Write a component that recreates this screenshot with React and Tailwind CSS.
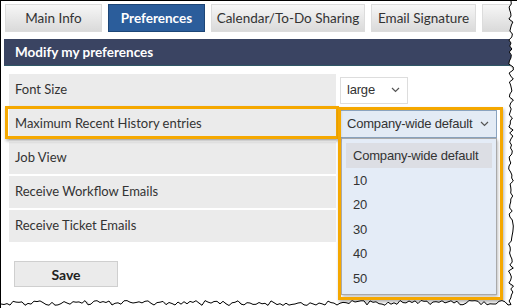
import React from "react";

function Chevron() {
  return (
    <svg width="9" height="6" viewBox="0 0 9 6" className="shrink-0">
      <polyline points="1,1 4.5,4.5 8,1" fill="none" stroke="#555" strokeWidth="1.2" />
    </svg>
  );
}

function tornPoints() {
  const pts = [];
  let seed = 7;
  const rnd = () => {
    seed = (seed * 9301 + 49297) % 233280;
    return seed / 233280;
  };
  for (let y = 0; y <= 300; y += 3) {
    pts.push([510 + (rnd() - 0.5) * 5, y]);
  }
  for (let x = 510; x >= 0; x -= 3) {
    pts.push([x, 302 + (rnd() - 0.5) * 5]);
  }
  return pts;
}

function TornEdge() {
  const pts = tornPoints();
  const line = pts.map((p) => p[0].toFixed(1) + "," + p[1].toFixed(1)).join(" ");
  const fill = line + " 0,308 517,308 517,0";
  const shadow = pts.map((p) => (p[0] + 2).toFixed(1) + "," + (p[1] + 2).toFixed(1)).join(" ");
  return (
    <svg className="absolute left-0 top-0 pointer-events-none" width="517" height="308" viewBox="0 0 517 308">
      <polyline points={shadow} fill="none" stroke="#bbb" strokeWidth="2" opacity="0.6" />
      <polygon points={fill} fill="#fff" />
      <polyline points={line} fill="none" stroke="#000" strokeWidth="1" />
    </svg>
  );
}

const tabBase =
  "h-[28px] flex items-center justify-center border text-[13.5px] shrink-0 whitespace-nowrap";
const arial = { fontFamily: "'Liberation Sans', Arial, sans-serif", letterSpacing: "-0.2px" };

export default function App() {
  const rows = ["Font Size", "Maximum Recent History entries", "Job View", "Receive Workflow Emails", "Receive Ticket Emails"];
  return (
    <div
      className="relative w-[517px] h-[308px] bg-white overflow-hidden border-l border-t border-black text-[#333]"
      style={{ fontFamily: "Lato, 'Open Sans', sans-serif" }}
    >
      {/* tabs */}
      <div className="flex gap-[6px] pl-[4px] pt-[3px]">
        <div className={tabBase + " w-[97px] border-[#dcdcdc] bg-gradient-to-b from-[#f6f6f6] to-[#dadada]"}>Main Info</div>
        <div className={tabBase + " w-[97px] border-[#1d4677] bg-[#2b5d9b] text-white font-bold"}>Preferences</div>
        <div className={tabBase + " w-[154px] border-[#dcdcdc] bg-gradient-to-b from-[#f6f6f6] to-[#dadada]"}>Calendar/To-Do Sharing</div>
        <div className={tabBase + " w-[105px] border-[#dcdcdc] bg-gradient-to-b from-[#f6f6f6] to-[#dadada]"}>Email Signature</div>
        <div className={tabBase + " w-[60px] border-[#dcdcdc] bg-gradient-to-b from-[#f6f6f6] to-[#dadada]"}></div>
      </div>

      {/* header */}
      <div className="mt-[7px] ml-[3px] h-[27px] bg-[#3a4462] border-b border-[#2f5766] flex items-center pl-[11px] text-white font-bold text-[13.5px]">
        Modify my preferences
      </div>

      {/* rows */}
      <div className="mt-[8px] ml-[8px] flex flex-col gap-[2px]">
        {rows.map((r, i) => (
          <div key={r} className="flex gap-[4px] h-[32px]">
            <div className="w-[327px] bg-[#ebebeb] flex items-center pl-[6px] text-[13px]">{r}</div>
            <div className="flex items-center">
              {i === 0 && (
                <div
                  className="w-[68px] h-[27px] border border-[#dddddd] bg-white flex items-center justify-between pl-[6px] pr-[7px] text-[13px] text-[#333]"
                  style={arial}
                >
                  <span>large</span>
                  <Chevron />
                </div>
              )}
              {i === 1 && (
                <div
                  className="w-[157px] h-[28px] border border-[#8aa3bf] bg-[#e3ebf5] flex items-center justify-between pl-[6px] pr-[7px] text-[13px] text-[#333] whitespace-nowrap"
                  style={arial}
                >
                  <span>Company-wide default</span>
                  <Chevron />
                </div>
              )}
            </div>
          </div>
        ))}
      </div>

      {/* save */}
      <div className="mt-[19px] ml-[13px] w-[104px] h-[26px] border border-[#cfcfcf] bg-[#ebebeb] flex items-center justify-center font-bold text-[14px] text-[#222]">
        Save
      </div>

      {/* dropdown list (overlay) */}
      <div
        className="absolute left-[340px] top-[137px] w-[156px] h-[157px] border border-[#a9a9a9] bg-[#e4ecf7] shadow-[1px_2px_3px_rgba(0,0,0,0.25)] pt-[4px] px-[4px] text-[13px] text-[#333] whitespace-nowrap"
        style={arial}
      >
        <div className="h-[25px] bg-[#dcdee4] flex items-center pl-[7px]">Company-wide default</div>
        {["10", "20", "30", "40", "50"].map((v) => (
          <div key={v} className="h-[24.5px] flex items-center pl-[7px]">{v}</div>
        ))}
      </div>

      {/* highlight boxes */}
      <div className="absolute left-[4px] top-[105px] w-[334px] h-[33px] border-[3px] border-[#f5a800] shadow-[1px_2px_3px_rgba(0,0,0,0.3)] pointer-events-none"></div>
      <div className="absolute left-[337px] top-[106px] w-[165px] h-[193px] border-[3px] border-[#f5a800] shadow-[1px_2px_3px_rgba(0,0,0,0.3)] pointer-events-none"></div>

      <TornEdge />
    </div>
  );
}
